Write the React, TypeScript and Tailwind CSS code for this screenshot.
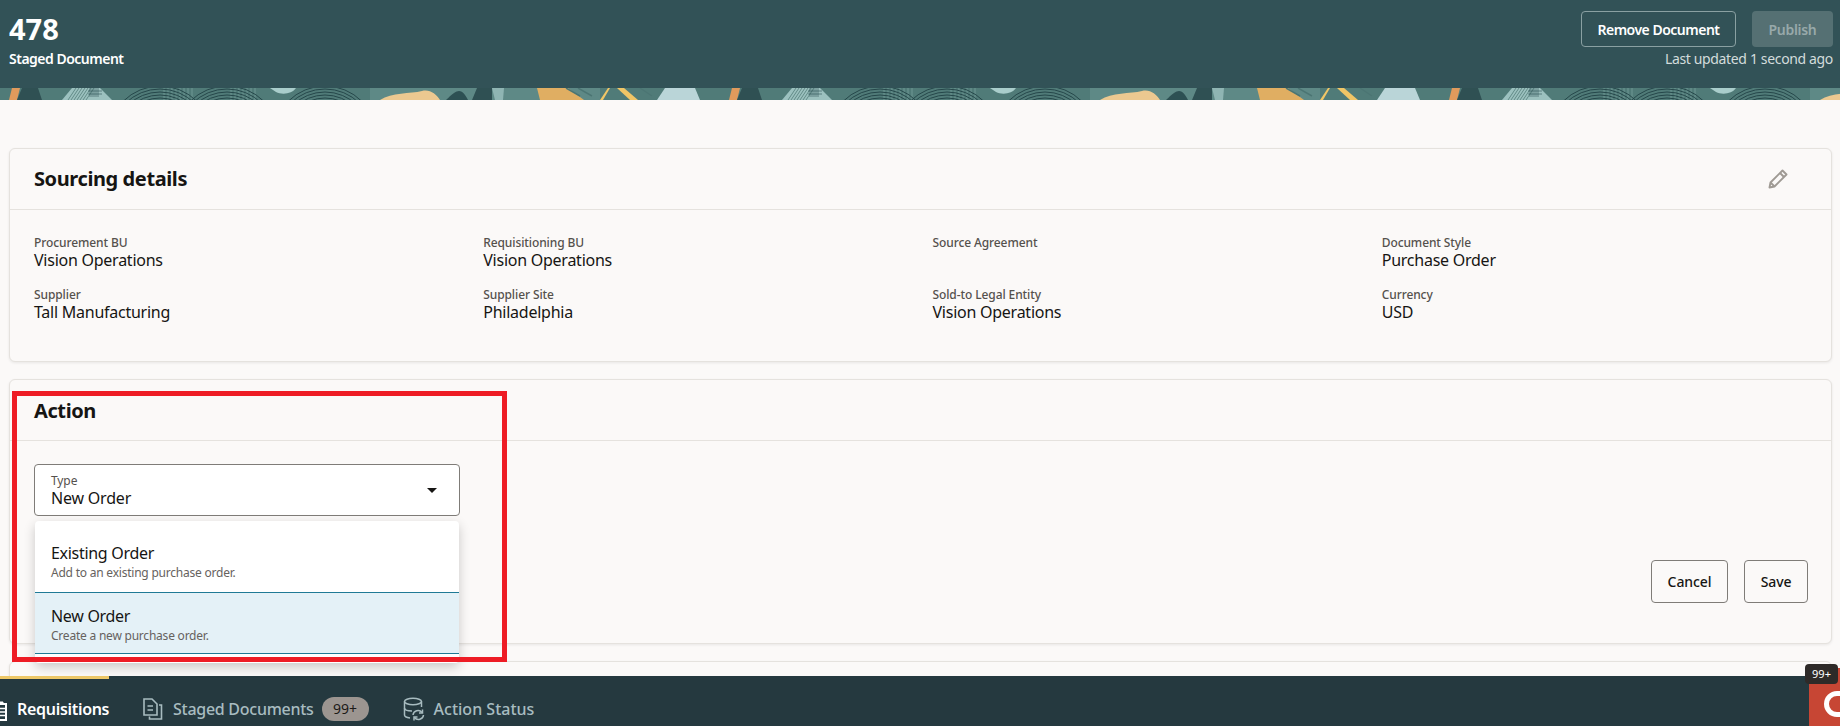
const FIELDS = [
  { label: 'Procurement BU', value: 'Vision Operations' },
  { label: 'Requisitioning BU', value: 'Vision Operations' },
  { label: 'Source Agreement', value: '' },
  { label: 'Document Style', value: 'Purchase Order' },
  { label: 'Supplier', value: 'Tall Manufacturing' },
  { label: 'Supplier Site', value: 'Philadelphia' },
  { label: 'Sold-to Legal Entity', value: 'Vision Operations' },
  { label: 'Currency', value: 'USD' },
]

const RINGS = [28, 31, 34, 37, 40, 43, 46, 49, 52]

function Fingerprint({ cx }: { cx: number }) {
  return (
    <g fill="none" stroke="#244649" strokeWidth="1">
      {RINGS.map((r) => (
        <circle key={r} cx={cx} cy={50} r={r} />
      ))}
    </g>
  )
}

// decorative band under the page header, repeats every 720px
function HeaderBand() {
  return (
    <svg width="1840" height="12" className="block">
      <defs>
        <pattern id="band" patternUnits="userSpaceOnUse" width="720" height="12">
          <rect width="720" height="12" fill="#507b78" />
          <rect x="370" width="230" height="12" fill="#5e8986" />
          <path d="M12 0H20L17 12H9Z" fill="#e09a5c" />
          <path d="M22 0H38L42 12H17Z" fill="#2f5053" />
          <path d="M72 0H100L112 12H62Z" fill="#9cc1bf" />
          <path d="M68 12L76 0M71 12L79 0M74 12L82 0M77 12L85 0M80 12L88 0M83 12L91 0M86 12L94 0" stroke="#507b78" strokeWidth="0.8" />
          <path d="M90 0V9M92 0V9M94 0V9M96 0V9M98 0V9M88 3H102M88 6H102" stroke="#2c4f52" strokeWidth="0.6" />
          <path d="M164 0V12M168 0V12M172 0V12M176 0V12M180 0V12M184 0V12M188 0V12M192 0V12M231 0V12M235 0V12M239 0V12M243 0V12M247 0V12M251 0V12M255 0V12" stroke="#8db3b1" strokeWidth="0.5" />
          <Fingerprint cx={160} />
          <Fingerprint cx={227} />
          <Fingerprint cx={325} />
          <path d="M270 0H296C292 6 282 7 276 4Z" fill="#a9cdcb" />
          <path d="M380 12C392 4 410 6 422 3C430 1 436 6 440 12Z" fill="#ecc890" />
          <path d="M446 12C452 6 456 3 459 3C463 3 466 8 468 12Z" fill="#2d5053" />
          <path d="M477 0H492V12H472Z" fill="#2f5053" />
          <path d="M492 0H504L503 12H495Z" fill="#8fb5b3" />
          <path d="M537 0H568L584 12H540Z" fill="#e0ae62" />
          <path d="M600 12L608 0H610L603 12Z" fill="#f0c566" />
          <path d="M617 0H624L638 12H630Z" fill="#f0c566" />
          <path d="M566 0L580 8M578 0L592 8M640 0L652 8" stroke="#4b7573" strokeWidth="1.5" />
          <path d="M665 0H695L700 12H657Z" fill="#bad5d8" />
        </pattern>
      </defs>
      <rect width="1840" height="12" fill="url(#band)" />
    </svg>
  )
}

function StagedIcon() {
  return (
    <svg width="20" height="22" viewBox="0 0 20 22" fill="none" stroke="currentColor" strokeWidth="1.6">
      <path d="M1 1H9L14 6V17H1Z" />
      <path d="M4.5 8H10M4.5 12H10" />
      <path d="M16 7H18.5V21H6.5V18.5" />
    </svg>
  )
}

function ActionStatusIcon() {
  return (
    <svg width="22" height="24" viewBox="0 0 22 24" fill="none" stroke="currentColor" strokeWidth="1.5">
      <ellipse cx="10" cy="4.5" rx="8.5" ry="3.2" />
      <path d="M1.5 4.5V18C1.5 19.5 4 20.6 7 21M18.5 4.5V10" />
      <path d="M1.5 11C1.5 12.8 5 14 9 14" />
      <path d="M10 18a5 5 0 0 1 9-2.5M20.5 18a5 5 0 0 1-9 2.5" />
      <path d="M19.5 12.5V16H16M11 23.5V20H14.5" />
    </svg>
  )
}

function PencilIcon() {
  return (
    <svg width="20" height="20" viewBox="0 0 20 20" fill="none" stroke="#9f9a94" strokeWidth="1.9" strokeLinejoin="round">
      <path d="M1.5 18.5L2.5 13.5L14.5 1.5L18.5 5.5L6.5 17.5Z" />
      <path d="M12 4L16 8M2.5 13.5L6.5 17.5" />
    </svg>
  )
}

function Card({ className, children }: { className: string; children?: React.ReactNode }) {
  return (
    <div className={`rounded-md border border-[#e5e2de] bg-[#fbf9f8] shadow-[0_1px_3px_rgba(0,0,0,0.08)] ${className}`}>
      {children}
    </div>
  )
}

function CardTitle({ children }: { children: React.ReactNode }) {
  return <h2 className="text-[20px] font-bold leading-none tracking-[-0.4px] text-[#161513]">{children}</h2>
}

export default function App() {
  return (
    <div className="relative flex h-[726px] w-[1840px] flex-col overflow-hidden bg-[#fbf9f8] font-['Noto_Sans',sans-serif] text-[#161513]">
      {/* Page header */}
      <div className="flex h-[88px] shrink-0 items-start justify-between bg-[#325257] pl-[9px] pr-[7px] pt-[11px] text-white">
        <div>
          <div className="text-[29px] font-bold leading-[36px]">478</div>
          <div className="mt-[3px] text-[14px] font-semibold leading-[18px] tracking-[-0.5px]">Staged Document</div>
        </div>
        <div className="flex flex-col items-end">
          <div className="flex gap-4">
            <button className="h-9 w-[155px] rounded border border-[#8aa0a2] text-[14px] font-semibold tracking-[-0.5px]">Remove Document</button>
            <button className="h-9 w-[81px] rounded bg-[#557073] text-[14px] font-semibold tracking-[-0.3px] text-[#98a9aa]">Publish</button>
          </div>
          <div className="mt-[3px] text-[14px] leading-[18px] tracking-[-0.35px] text-[#d3dcdc]">Last updated 1 second ago</div>
        </div>
      </div>
      <HeaderBand />

      {/* Page body */}
      <div className="flex min-h-0 flex-1 flex-col gap-[17px] pl-[9px] pr-2 pt-12">
        <Card className="h-[214px] shrink-0">
          <div className="flex h-[61px] items-center justify-between border-b border-[#e5e2de] pl-6 pr-[43px]">
            <CardTitle>Sourcing details</CardTitle>
            <PencilIcon />
          </div>
          <div className="grid grid-cols-4 gap-y-[18px] pl-6 pt-[25px]">
            {FIELDS.map((f) => (
              <div key={f.label} className="h-[34px]">
                <div className="text-[12px] font-medium leading-[15px] tracking-[-0.1px] text-[#55514d]">{f.label}</div>
                <div className="text-[16px] leading-[20px] tracking-[-0.25px]">{f.value}</div>
              </div>
            ))}
          </div>
        </Card>

        <Card className="h-[265px] shrink-0">
          <div className="flex h-[61px] items-center border-b border-[#e5e2de] pl-6 pt-px">
            <CardTitle>Action</CardTitle>
          </div>
          <div className="flex h-[202px] flex-col justify-between pb-10 pl-6 pr-[23px] pt-[23px]">
            <div className="flex h-[52px] w-[426px] items-center justify-between rounded border border-[#7f7c78] bg-white pl-4 pr-[22px]">
              <div className="pt-px">
                <div className="text-[12px] leading-[15px] tracking-[-0.1px] text-[#55514d]">Type</div>
                <div className="text-[16px] leading-[20px] tracking-[-0.2px]">New Order</div>
              </div>
              <div className="h-0 w-0 border-x-[5px] border-t-[5px] border-x-transparent border-t-[#161513]" />
            </div>
            <div className="flex justify-end gap-4">
              <button className="h-[43px] w-[77px] rounded border border-[#7f7c78] text-[14px] font-medium tracking-[-0.1px]">Cancel</button>
              <button className="h-[43px] w-16 rounded border border-[#7f7c78] text-[14px] font-medium tracking-[-0.1px]">Save</button>
            </div>
          </div>
        </Card>

        <Card className="h-20 shrink-0" />
      </div>

      {/* Dropdown menu over the Action card */}
      <div className="absolute left-[35px] top-[521px] z-10 h-[142px] w-[424px] rounded bg-white pt-5 shadow-[0_4px_12px_rgba(0,0,0,0.2)]">
        <div className="h-[52px] border-b border-[#1f7a96] pl-4">
          <div className="text-[16px] leading-[24px] tracking-[-0.3px]">Existing Order</div>
          <div className="text-[12px] leading-[16px] tracking-[-0.22px] text-[#66625e]">Add to an existing purchase order.</div>
        </div>
        <div className="h-[61px] border-b border-[#1f7a96] bg-[#e4f1f7] pl-4 pt-[11px]">
          <div className="text-[16px] leading-[24px] tracking-[-0.3px]">New Order</div>
          <div className="text-[12px] leading-[16px] tracking-[-0.22px] text-[#66625e]">Create a new purchase order.</div>
        </div>
      </div>

      {/* Red highlight drawn on the screenshot */}
      <div className="absolute left-3 top-[391px] z-20 h-[271px] w-[495px] border-[5px] border-[#ee1c25]" />

      {/* Bottom tabs */}
      <div className="flex h-[50px] shrink-0 items-center bg-[#25393f] text-[16px] font-medium leading-none text-[#a8bcc0]">
        <div className="relative flex h-full w-[109px] items-center pl-[17px] pt-4 font-semibold tracking-[-0.3px] text-white">
          <div className="absolute left-0 top-0 h-[3px] w-full bg-[#eec868]" />
          <svg width="8" height="20" viewBox="0 0 8 20" className="absolute left-0 top-[25px]" fill="none" stroke="currentColor" strokeWidth="2">
            <path d="M-6 3H6V19H-6" />
            <path d="M-3 7.5H5M-3 11H5M-3 14.5H5" strokeWidth="1.6" />
            <path d="M-2 1H3V3H-2Z" fill="currentColor" strokeWidth="1" />
          </svg>
          Requisitions
        </div>
        <div className="ml-[34px] flex h-full items-center pt-4 tracking-[-0.27px]">
          <StagedIcon />
          <span className="ml-[10px]">Staged Documents</span>
          <span className="ml-2 flex h-6 w-[47px] items-center justify-center rounded-xl bg-[#9c9590] text-[14px] font-normal tracking-normal text-[#1c1a18]">99+</span>
        </div>
        <div className="ml-[34px] flex h-full items-center pt-4">
          <ActionStatusIcon />
          <span className="ml-[9px]">Action Status</span>
        </div>
      </div>

      {/* Corner launcher, overlaps the tab bar */}
      <div className="absolute bottom-0 right-0 z-10 h-[58px] w-[31px] overflow-hidden bg-[#c74634]">
        <div className="absolute left-[15px] top-[23px] h-[26px] w-[34px] rounded-[13px] border-[5px] border-white" />
      </div>
      <div className="absolute left-[1805px] top-[664px] z-20 flex h-5 w-[33px] items-center justify-center rounded-sm bg-[#2e2a28] text-[11px] text-white">99+</div>
    </div>
  )
}
